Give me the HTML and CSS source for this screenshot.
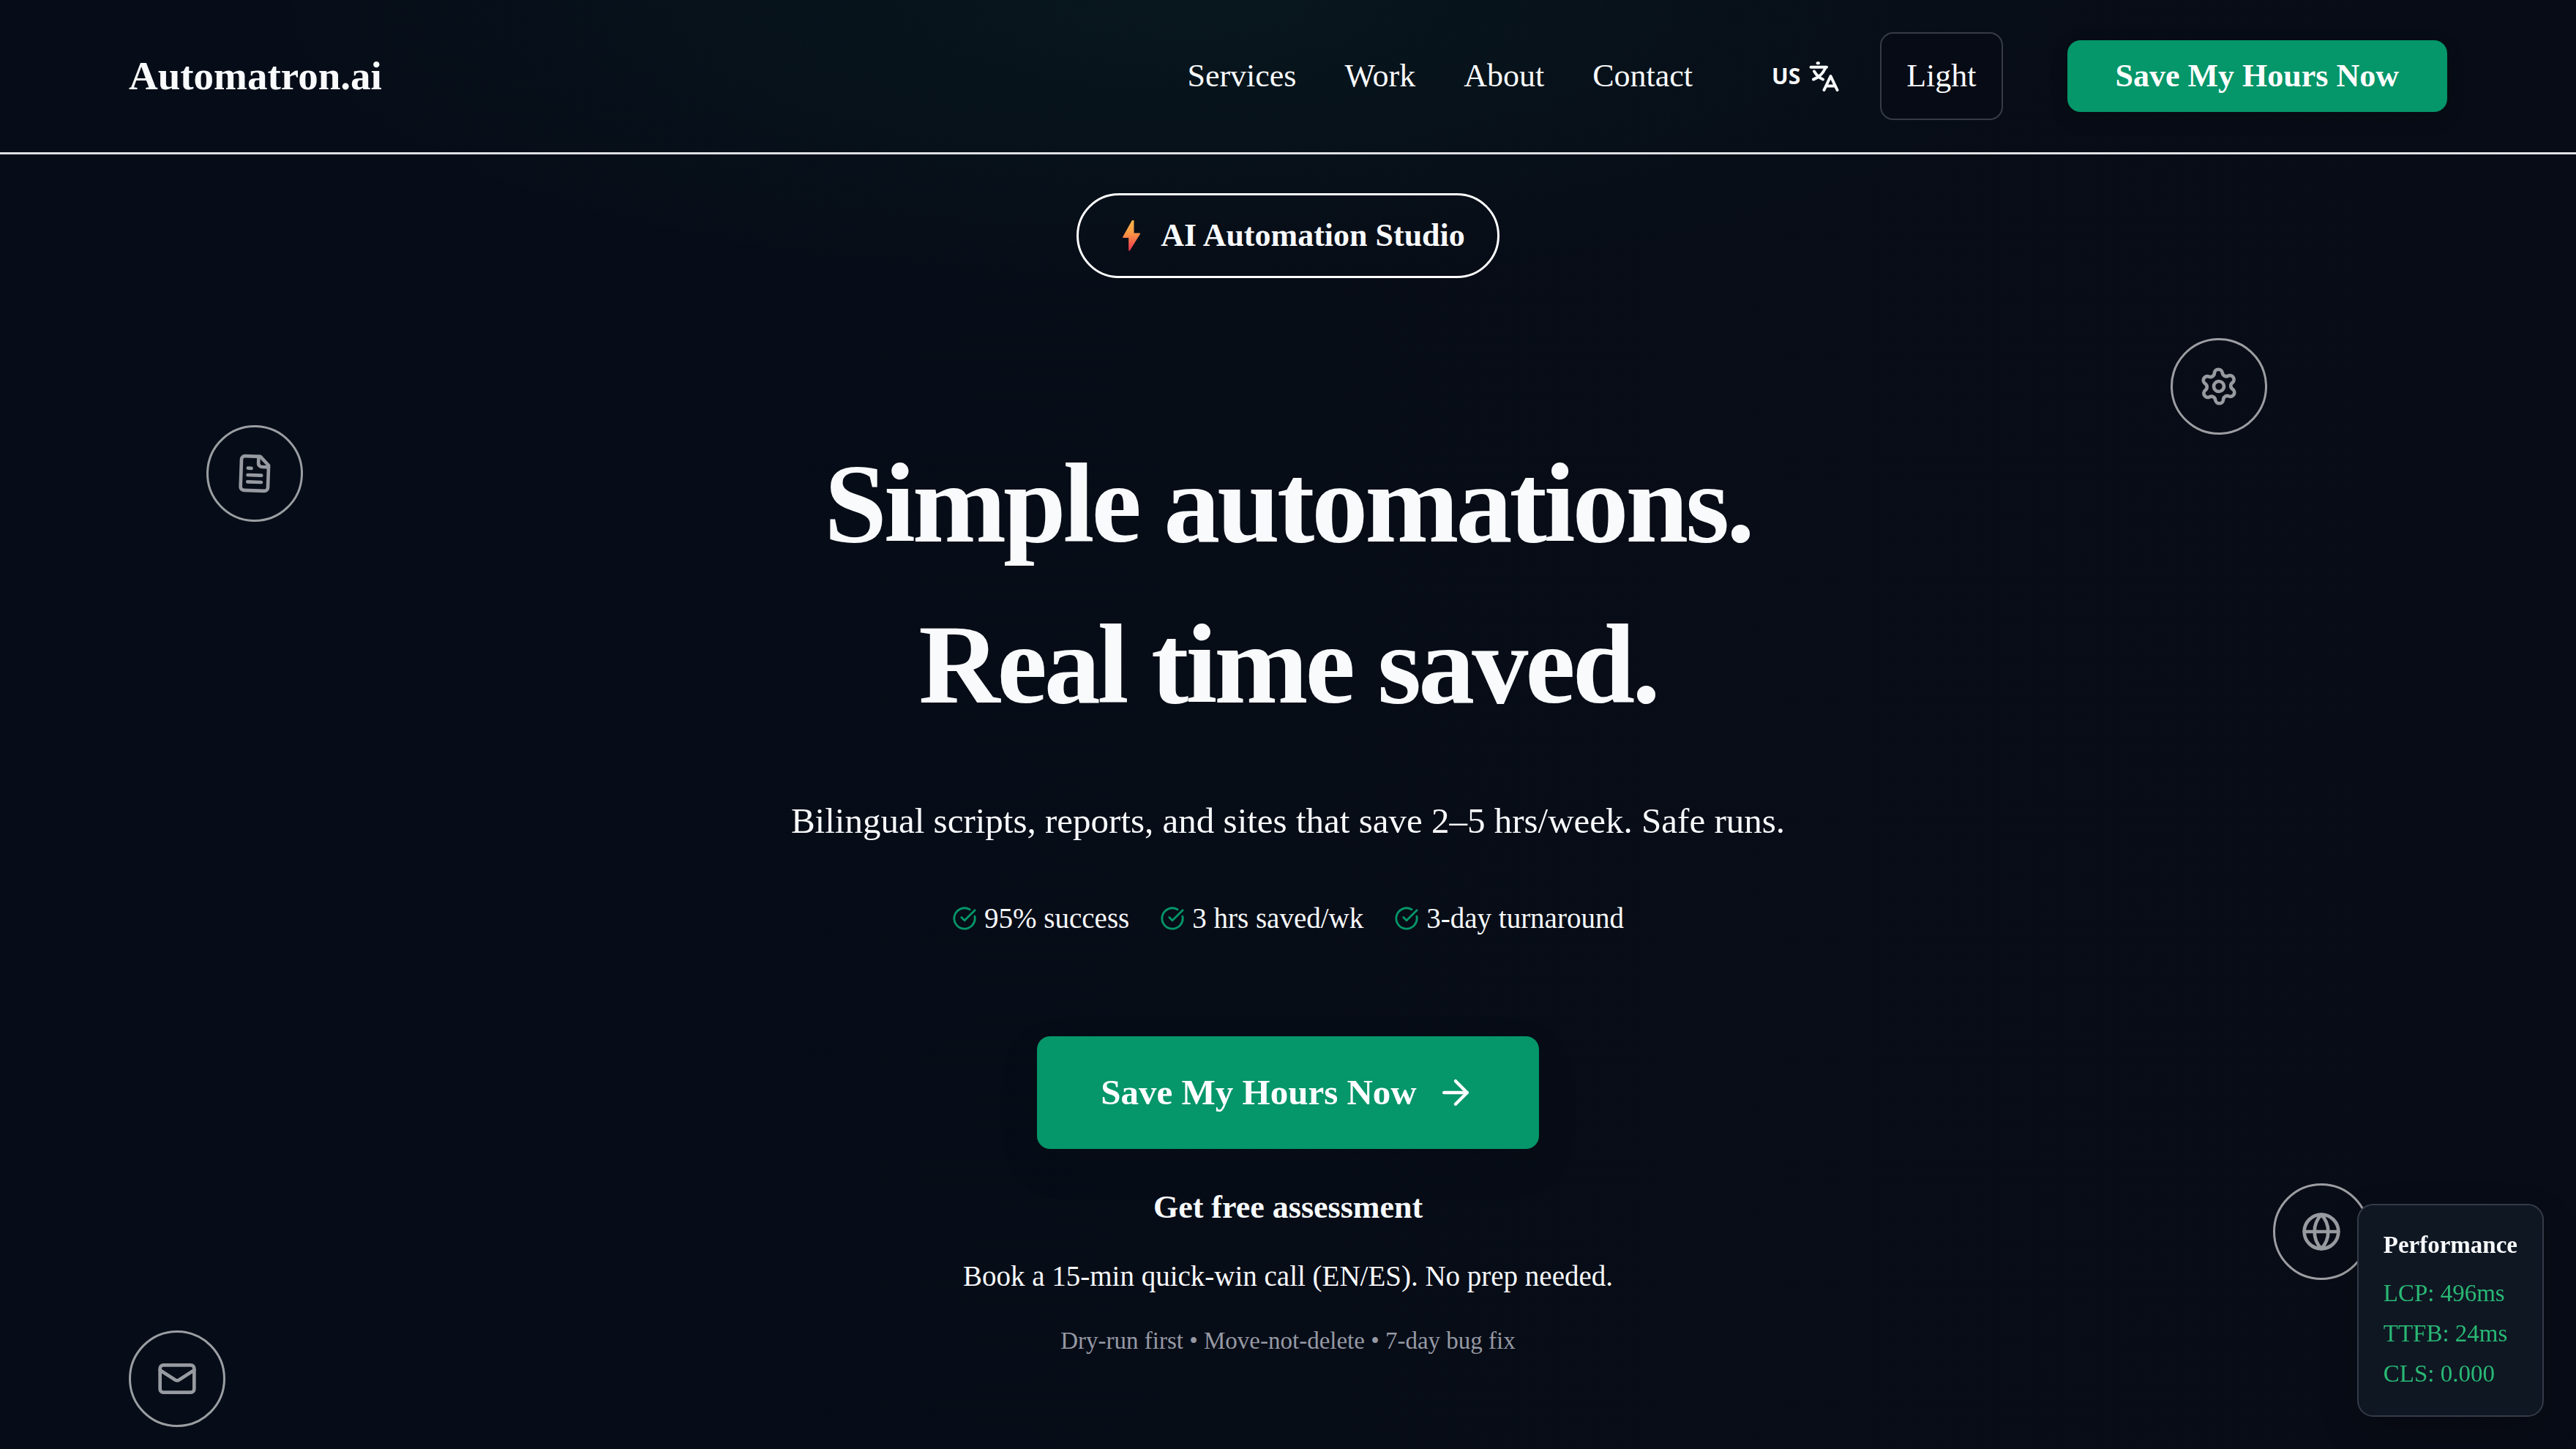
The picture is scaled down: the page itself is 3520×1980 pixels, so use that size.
FILE: index.html
```html
<!DOCTYPE html>
<html lang="en">
<head>
<meta charset="utf-8">
<meta name="viewport" content="width=device-width, initial-scale=1">
<title>Automatron.ai</title>
<link rel="stylesheet" href="styles.css">
</head>
<body>
<header class="site-header">
  <a class="logo" href="#">Automatron.ai</a>
  <div class="header-right">
    <nav class="nav">
      <a href="#services">Services</a>
      <a href="#work">Work</a>
      <a href="#about">About</a>
      <a href="#contact">Contact</a>
    </nav>
    <button class="lang" type="button" aria-label="Change language">
      <span class="lang-code">US</span>
      <svg class="lang-icon" viewBox="0 0 41 41" aria-hidden="true">
        <path d="M11.500 2.200h1.500M2.500 7.800h21.500M22 9.500C19 16 13 22 6 24.500M7 13.500c3 5 7 9 12 11M20.500 39l9-19 9 19M24 33.500h11"/>
      </svg>
    </button>
    <button class="theme" type="button">Light</button>
    <a class="cta cta-small" href="#book">Save My Hours Now</a>
  </div>
</header>

<main class="hero">
  <p class="pill">
    <svg class="bolt" viewBox="0 0 24 42" aria-hidden="true">
      <defs>
        <linearGradient id="bolt-fill" x1="0" y1="0" x2="0" y2="1">
          <stop offset="0" stop-color="#fcb548"/>
          <stop offset="0.4" stop-color="#fb9a44"/>
          <stop offset="1" stop-color="#ee3350"/>
        </linearGradient>
      </defs>
      <path fill="url(#bolt-fill)" d="M13.500 0h2v17.500h7.500q1.500 0 .8 1.500L10 41.200q-1.800 1.500-1.800-.7V24H1Q-.3 24 .3 22.500L12.500.8q.4-.8 1-.8z"/>
    </svg>
    AI Automation Studio
  </p>

  <h1 class="title">Simple automations.<br>Real time saved.</h1>
  <p class="subtitle">Bilingual scripts, reports, and sites that save 2–5 hrs/week. Safe runs.</p>

  <ul class="stats">
    <li><svg class="check" viewBox="0 0 24 24" aria-hidden="true"><path d="M21.801 10A10 10 0 1 1 17 3.335"/><path d="m9 11 3 3L22 4"/></svg>95% success</li>
    <li><svg class="check" viewBox="0 0 24 24" aria-hidden="true"><path d="M21.801 10A10 10 0 1 1 17 3.335"/><path d="m9 11 3 3L22 4"/></svg>3 hrs saved/wk</li>
    <li><svg class="check" viewBox="0 0 24 24" aria-hidden="true"><path d="M21.801 10A10 10 0 1 1 17 3.335"/><path d="m9 11 3 3L22 4"/></svg>3-day turnaround</li>
  </ul>

  <a class="cta cta-large" href="#book">Save My Hours Now
    <svg class="arrow" viewBox="0 0 24 24" aria-hidden="true"><path d="M5 12h14"/><path d="m12 5 7 7-7 7"/></svg>
  </a>

  <p class="assessment">Get free assessment</p>
  <p class="booking">Book a 15-min quick-win call (EN/ES). No prep needed.</p>
  <p class="terms">Dry-run first • Move-not-delete • 7-day bug fix</p>

  <span class="float float-doc"><svg viewBox="0 0 24 24" aria-hidden="true"><path d="M15 2H6a2 2 0 0 0-2 2v16a2 2 0 0 0 2 2h12a2 2 0 0 0 2-2V7Z"/><path d="M14 2v4a2 2 0 0 0 2 2h4"/><path d="M10 9H8M16 13H8M16 17H8"/></svg></span>
  <span class="float float-gear"><svg viewBox="0 0 24 24" aria-hidden="true"><path d="M9.671 4.136a2.340 2.340 0 0 1 4.659 0 2.340 2.340 0 0 0 3.319 1.915 2.340 2.340 0 0 1 2.330 4.033 2.340 2.340 0 0 0 0 3.831 2.340 2.340 0 0 1-2.330 4.033 2.340 2.340 0 0 0-3.319 1.915 2.340 2.340 0 0 1-4.659 0 2.340 2.340 0 0 0-3.320-1.915 2.340 2.340 0 0 1-2.330-4.033 2.340 2.340 0 0 0 0-3.831A2.340 2.340 0 0 1 6.350 6.051a2.340 2.340 0 0 0 3.319-1.915"/><circle cx="12" cy="12" r="3"/></svg></span>
  <span class="float float-globe"><svg viewBox="0 0 24 24" aria-hidden="true"><circle cx="12" cy="12" r="10"/><path d="M12 2a14.500 14.500 0 0 0 0 20 14.500 14.500 0 0 0 0-20"/><path d="M2 12h20"/></svg></span>
  <span class="float float-mail"><svg viewBox="0 0 24 24" aria-hidden="true"><path d="m22 7-8.991 5.727a2 2 0 0 1-2.009 0L2 7"/><rect x="2" y="4" width="20" height="16" rx="2"/></svg></span>
</main>

<aside class="performance">
  <h2>Performance</h2>
  <p>LCP: 496ms</p>
  <p>TTFB: 24ms</p>
  <p>CLS: 0.000</p>
</aside>
</body>
</html>
```

FILE: styles.css
```css
* {
  box-sizing: border-box;
}

body {
  margin: 0;
  min-height: 100vh;
  display: flex;
  flex-direction: column;
  color: #f8fafc;
  background:
    radial-gradient(ellipse 36% 20% at 46% 0, rgba(16, 185, 129, 0.06), transparent),
    linear-gradient(90deg, #060d18, #080c16);
  font-family: "Liberation Serif", "Times New Roman", serif;
  font-size: 44px;
  line-height: 66px;
}

h1, h2, p, ul {
  margin: 0;
  padding: 0;
}

a {
  color: inherit;
  text-decoration: none;
}

button {
  font: inherit;
  color: inherit;
  cursor: pointer;
}

svg {
  flex: none;
}

.site-header {
  display: flex;
  align-items: center;
  justify-content: space-between;
  padding: 44px 5%;
  border-bottom: 3px solid #dfe1e5;
}

.logo {
  font-size: 55px;
  font-weight: 700;
}

.header-right,
.nav {
  display: flex;
  align-items: center;
}

.nav {
  gap: 66px;
}

.lang {
  display: flex;
  align-items: center;
  gap: 12px;
  margin: 0 56px 0 108px;
  padding: 0;
  border: 0;
  background: none;
}

.lang-code {
  font-family: "Open Sans", sans-serif;
  font-size: 30px;
  font-weight: 700;
}

.lang-icon {
  width: 41px;
  height: 41px;
  fill: none;
  stroke: currentColor;
  stroke-width: 4;
  stroke-linecap: round;
  stroke-linejoin: round;
}

.theme {
  margin-right: 88px;
  padding: 25px 34px;
  border: 2px solid #353b47;
  border-radius: 18px;
  background: #070b15;
}

.cta {
  display: flex;
  align-items: center;
  border-radius: 18px;
  background: #059669;
  color: #fff;
  font-weight: 700;
}

.cta-small {
  padding: 16px 66px;
  box-shadow: 0 9px 26px rgba(0, 0, 0, 0.15);
}

.hero {
  position: relative;
  flex: 1;
  display: flex;
  flex-direction: column;
  align-items: center;
  padding: 53px 5% 60px;
  text-align: center;
}

.pill {
  display: flex;
  align-items: center;
  gap: 28px;
  padding: 22px 44px 22px 60px;
  border: 3px solid #fff;
  border-radius: 58px;
  font-weight: 700;
}

.bolt {
  width: 24px;
  height: 42px;
}

.title {
  margin-top: 198px;
  font-size: 154px;
  font-weight: 700;
  line-height: 220px;
  letter-spacing: -4px;
}

.subtitle {
  margin-top: 64px;
  font-size: 49px;
  line-height: 80px;
}

.stats {
  display: flex;
  gap: 42px;
  margin-top: 63px;
  font-size: 39px;
  line-height: 60px;
  list-style: none;
}

.stats li {
  display: flex;
  align-items: center;
  gap: 10px;
}

.check,
.arrow,
.float svg {
  fill: none;
  stroke: currentColor;
  stroke-width: 2;
  stroke-linecap: round;
  stroke-linejoin: round;
}

.check {
  width: 34px;
  height: 34px;
  color: #059669;
}

.cta-large {
  gap: 26px;
  margin-top: 131px;
  padding: 44px 87px;
  font-size: 49px;
  box-shadow: 0 22px 55px rgba(0, 0, 0, 0.12);
}

.arrow {
  width: 54px;
  height: 54px;
}

.assessment {
  margin-top: 47px;
  font-weight: 700;
}

.booking {
  margin-top: 31px;
  font-size: 39px;
  line-height: 60px;
}

.terms {
  margin-top: 31px;
  font-size: 33px;
  line-height: 54px;
  color: #9699a4;
}

.float {
  position: absolute;
  display: grid;
  place-items: center;
  width: 132px;
  height: 132px;
  border: 3px solid #fff;
  border-radius: 50%;
  opacity: 0.6;
}

.float svg {
  width: 56px;
  height: 56px;
}

.float-doc {
  top: 370px;
  left: 8%;
  transform: rotate(2deg);
}

.float-gear {
  top: 251px;
  right: 12%;
  transform: rotate(-2deg);
}

.float-globe {
  top: 1406px;
  right: 8%;
}

.float-mail {
  top: 1607px;
  left: 5%;
}

.performance {
  position: fixed;
  right: 44px;
  bottom: 44px;
  padding: 27px 34px 29px;
  border: 2px solid #353b47;
  border-radius: 22px;
  background: #0f1723;
  box-shadow: 0 22px 55px rgba(0, 0, 0, 0.15);
  color: #29b874;
  font-size: 33px;
  line-height: 55px;
}

.performance h2 {
  margin-bottom: 11px;
  color: #f8fafc;
  font-size: 33px;
}
```
